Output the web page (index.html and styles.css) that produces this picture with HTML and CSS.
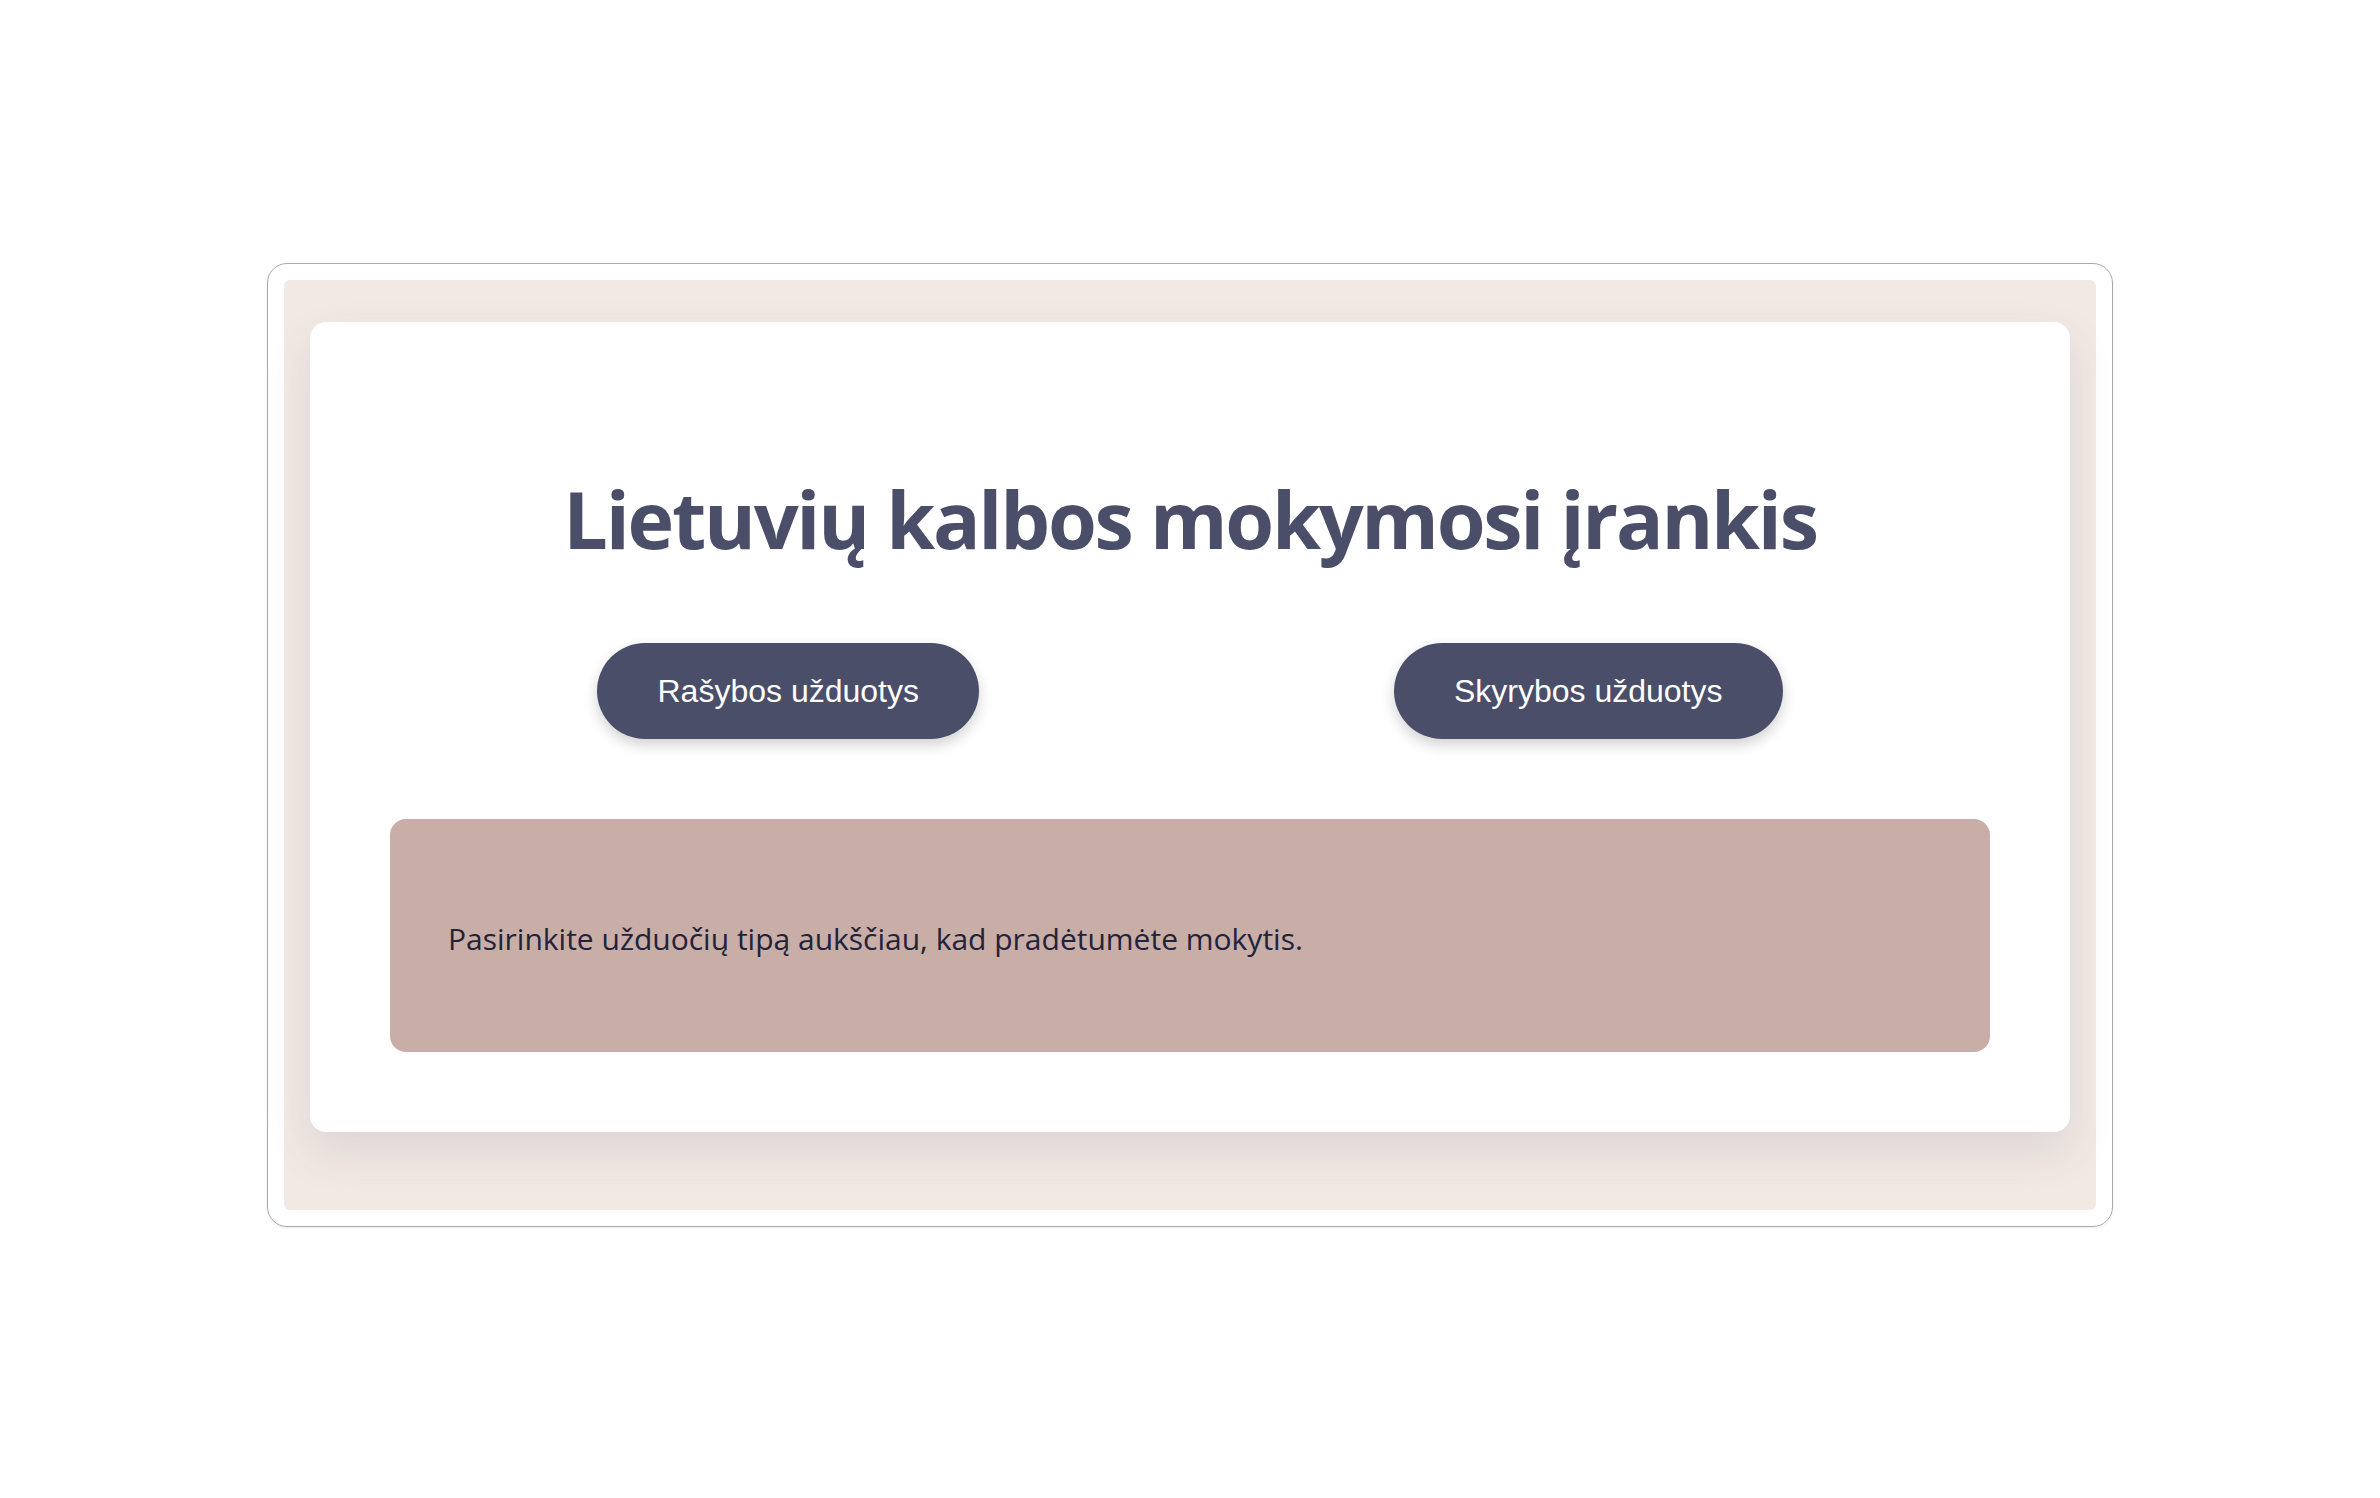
FILE: index.html
```html
<!DOCTYPE html>
<html lang="lt">
<head>
<meta charset="utf-8">
<title>Lietuvių kalbos mokymosi įrankis</title>
<link rel="stylesheet" href="styles.css">
</head>
<body>
<div class="frame">
  <div class="stage">
    <main class="card">
      <h1 class="title">Lietuvių kalbos mokymosi įrankis</h1>
      <div class="actions">
        <button class="btn" type="button">Rašybos užduotys</button>
        <button class="btn" type="button">Skyrybos užduotys</button>
      </div>
      <section class="message">
        <p class="message-text">Pasirinkite užduočių tipą aukščiau, kad pradėtumėte mokytis.</p>
      </section>
    </main>
  </div>
</div>
</body>
</html>
```

FILE: styles.css
```css
* { box-sizing: border-box; }

html, body {
  margin: 0;
  padding: 0;
  background: #ffffff;
}

body {
  min-height: 1498px;
  display: flex;
  align-items: center;
  justify-content: center;
  font-family: "Open Sans", "Noto Sans", sans-serif;
}

.frame {
  width: 1846px;
  height: 964px;
  border: 1.5px solid #aaaaaa;
  border-radius: 20px;
  padding: 16px;
  margin-top: -8px;
  box-shadow: 0 1px 3px rgba(0, 0, 0, 0.08);
}

.stage {
  height: 100%;
  background: #f2e9e4;
  border-radius: 6px;
  padding: 42px 26px 77px;
}

.card {
  background: #ffffff;
  border-radius: 16px;
  padding: 0 80px 80px;
  box-shadow: 0 20px 45px rgba(74, 78, 105, 0.12);
}

.title {
  margin: 0;
  padding-top: 147px;
  font-size: 79px;
  line-height: 100px;
  font-weight: 700;
  color: #4a4e69;
  text-align: center;
  letter-spacing: -2.25px;
}

.actions {
  display: flex;
  justify-content: space-around;
  margin-top: 74px;
}

.btn {
  font-family: "Liberation Sans", Arial, sans-serif;
  font-size: 32px;
  line-height: 36px;
  color: #ffffff;
  background: #4a4e69;
  border: none;
  border-radius: 48px;
  padding: 30px 60px;
  box-shadow: 0 6px 14px rgba(0, 0, 0, 0.18);
  cursor: pointer;
}

.message {
  margin-top: 80px;
  min-height: 233px;
  background: #c9ada7;
  border-radius: 16px;
  padding: 0 58px;
  display: flex;
  align-items: center;
}

.message-text {
  margin: 6px 0 0;
  font-size: 30px;
  line-height: 40px;
  color: #22223b;
}
```
